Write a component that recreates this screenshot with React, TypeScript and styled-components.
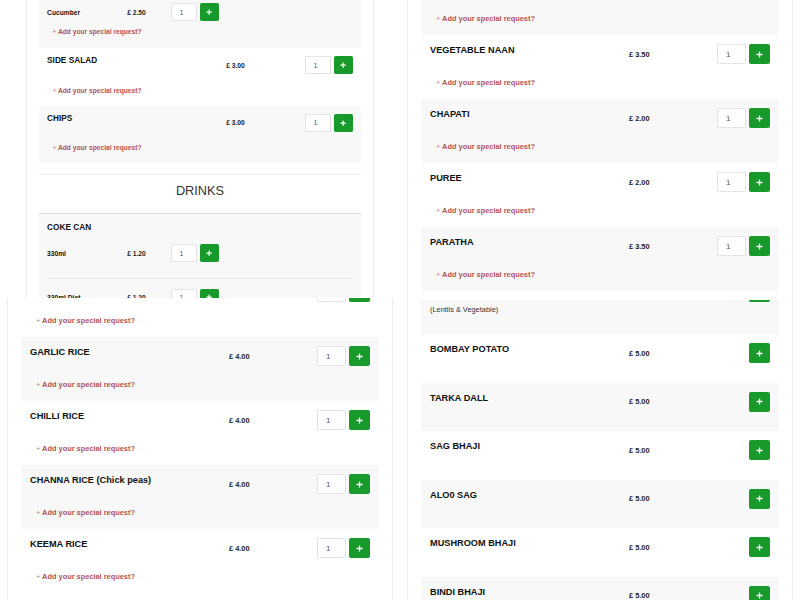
import styled, { createGlobalStyle } from 'styled-components';
import { FaPlus } from 'react-icons/fa';

const GlobalStyle = createGlobalStyle`
  html, body {
    margin: 0;
    background: #fff;
  }

  body {
    color: #111;
    font-family: 'Liberation Sans', Arial, Helvetica, sans-serif;
  }

  * {
    box-sizing: border-box;
  }
`;

const Page = styled.div`
  display: grid;
  grid-template-columns: 400px 400px;
  height: 600px;
  overflow: hidden;
  width: 800px;
`;

const Column = styled.div`
  display: flex;
  flex-direction: column;
`;

const Tile = styled.div<{ $height: number }>`
  flex: none;
  height: ${({ $height }) => $height}px;
  overflow: hidden;
`;

const Card = styled.div<{ $offset: number; $zoom?: number }>`
  background: #fff;
  border: 1px solid #ececec;
  margin: ${({ $offset }) => -$offset}px auto 0;
  padding: 13px;
  width: 386px;
  zoom: ${({ $zoom }) => $zoom ?? 1};
`;

const ItemList = styled.div`
  & > *:nth-child(odd) {
    background: #f8f8f8;
  }
`;

const Item = styled.div<{ $kind: 'full' | 'compact' | 'desc' }>`
  padding: 9px 9px
    ${({ $kind }) =>
      $kind === 'full' ? '10px' : $kind === 'desc' ? '18px' : '19.5px'};
`;

const MainLine = styled.div`
  align-items: center;
  display: grid;
  grid-template-columns: 199px 1fr auto;
  height: 20px;
`;

const Title = styled.div`
  align-self: start;
  font-size: 9.2px;
  font-weight: bold;
  line-height: 12px;
  white-space: nowrap;
`;

const Price = styled.div`
  color: #222;
  font-size: 7.4px;
  font-weight: bold;
`;

const Controls = styled.div`
  display: flex;
  gap: 3px;
  justify-content: flex-end;
`;

const QtyInput = styled.input`
  background: #fff;
  border: 1px solid #e4e4e4;
  border-radius: 1px;
  color: #555;
  font-family: inherit;
  font-size: 8px;
  height: 20px;
  outline: none;
  padding: 0 0 0 8px;
  width: 29px;
`;

const AddButton = styled.button`
  align-items: center;
  background: #17992c;
  border: none;
  border-radius: 2px;
  color: #fff;
  display: flex;
  height: 20px;
  justify-content: center;
  padding: 0;
  width: 21px;
`;

const Request = styled.a<{ $tight?: boolean }>`
  color: #b35353;
  display: block;
  font-size: 7.4px;
  font-weight: bold;
  line-height: 12px;
  margin-top: ${({ $tight }) => ($tight ? 7 : 13)}px;
  padding-left: 6px;
  text-decoration: none;

  span {
    color: #c98585;
    font-weight: normal;
  }
`;

const Description = styled.div`
  color: #333;
  font-size: 7.4px;
  line-height: 12px;
  margin-top: 2px;
`;

const SectionHeader = styled.h2`
  border-bottom: 2px solid #dedede;
  border-top: 1px solid #eee;
  color: #333;
  font-size: 14.2px;
  font-weight: normal;
  line-height: 16px;
  margin: 12px 0 0;
  padding: 10px 0 16px;
  text-align: center;
`;

const VariantItem = styled.div`
  padding: 9px 9px 11px;
`;

const VariantTitle = styled.div`
  font-size: 9.2px;
  font-weight: bold;
  line-height: 14px;
`;

const VariantRow = styled.div<{ $tight?: boolean }>`
  align-items: center;
  display: grid;
  grid-template-columns: 89px 49px auto;
  justify-content: start;
  padding: 11px 0 ${({ $tight }) => ($tight ? 0 : 17)}px;

  & + & {
    border-top: 1px solid #e8e8e8;
  }
`;

const VariantName = styled.div`
  font-size: 7.4px;
  font-weight: bold;
`;

type MenuEntry = {
  name: string;
  price: string;
  kind?: 'full' | 'compact' | 'desc';
  description?: string;
};

type Variant = { name: string; price: string };

const AddControls = ({ withQty }: { withQty: boolean }) => (
  <Controls>
    {withQty && <QtyInput defaultValue="1" />}
    <AddButton>
      <FaPlus size={7} />
    </AddButton>
  </Controls>
);

const SpecialRequest = ({ tight }: { tight?: boolean }) => (
  <Request $tight={tight} href="#">
    <span>+</span> Add your special request?
  </Request>
);

const MenuItem = ({ name, price, kind = 'full', description }: MenuEntry) => (
  <Item $kind={kind}>
    <MainLine>
      <Title>{name}</Title>
      <Price>£ {price}</Price>
      <AddControls withQty={kind === 'full'} />
    </MainLine>
    {kind === 'full' && <SpecialRequest />}
    {kind === 'desc' && <Description>{description}</Description>}
  </Item>
);

const VariantBlock = ({
  title,
  variants,
  withRequest,
}: {
  title: string;
  variants: Variant[];
  withRequest?: boolean;
}) => (
  <VariantItem>
    <VariantTitle>{title}</VariantTitle>
    {variants.map((v, i) => (
      <VariantRow
        key={v.name}
        $tight={withRequest && i === variants.length - 1}>
        <VariantName>{v.name}</VariantName>
        <Price>£ {v.price}</Price>
        <AddControls withQty />
      </VariantRow>
    ))}
    {withRequest && <SpecialRequest tight />}
  </VariantItem>
);

const sides: MenuEntry[] = [
  { name: 'SIDE SALAD', price: '3.00' },
  { name: 'CHIPS', price: '3.00' },
];

const breads: MenuEntry[] = [
  { name: 'KEEMA NAAN', price: '3.50' },
  { name: 'VEGETABLE NAAN', price: '3.50' },
  { name: 'CHAPATI', price: '2.00' },
  { name: 'PUREE', price: '2.00' },
  { name: 'PARATHA', price: '3.50' },
  { name: 'TANDOORI ROTI', price: '2.00' },
];

const rice: MenuEntry[] = [
  { name: 'PILAU RICE', price: '3.50' },
  { name: 'MUSHROOM RICE', price: '4.00' },
  { name: 'GARLIC RICE', price: '4.00' },
  { name: 'CHILLI RICE', price: '4.00' },
  { name: 'CHANNA RICE (Chick peas)', price: '4.00' },
  { name: 'KEEMA RICE', price: '4.00' },
];

const vegSides: MenuEntry[] = [
  {
    name: 'DALL SAMBAR',
    price: '5.00',
    kind: 'desc',
    description: '(Lentils & Vegetable)',
  },
  { name: 'BOMBAY POTATO', price: '5.00', kind: 'compact' },
  { name: 'TARKA DALL', price: '5.00', kind: 'compact' },
  { name: 'SAG BHAJI', price: '5.00', kind: 'compact' },
  { name: 'ALO0 SAG', price: '5.00', kind: 'compact' },
  { name: 'MUSHROOM BHAJI', price: '5.00', kind: 'compact' },
  { name: 'BINDI BHAJI', price: '5.00', kind: 'compact' },
];

export default function App() {
  return (
    <>
      <GlobalStyle />
      <Page>
        <Column>
          <Tile $height={298}>
            <Card $offset={44.67} $zoom={0.9}>
              <ItemList>
                <VariantBlock
                  title="RAITA"
                  variants={[{ name: 'Cucumber', price: '2.50' }]}
                  withRequest
                />
                {sides.map(item => (
                  <MenuItem key={item.name} {...item} />
                ))}
              </ItemList>
              <SectionHeader>DRINKS</SectionHeader>
              <ItemList>
                <VariantBlock
                  title="COKE CAN"
                  variants={[
                    { name: '330ml', price: '1.20' },
                    { name: '330ml Diet', price: '1.20' },
                  ]}
                />
              </ItemList>
            </Card>
          </Tile>
          <Tile $height={302}>
            <Card $offset={103}>
              <ItemList>
                {rice.map(item => (
                  <MenuItem key={item.name} {...item} />
                ))}
              </ItemList>
            </Card>
          </Tile>
        </Column>
        <Column>
          <Tile $height={300}>
            <Card $offset={43}>
              <ItemList>
                {breads.map(item => (
                  <MenuItem key={item.name} {...item} />
                ))}
              </ItemList>
            </Card>
          </Tile>
          <Tile $height={300}>
            <Card $offset={41}>
              <ItemList>
                {vegSides.map(item => (
                  <MenuItem key={item.name} {...item} />
                ))}
              </ItemList>
            </Card>
          </Tile>
        </Column>
      </Page>
    </>
  );
}
